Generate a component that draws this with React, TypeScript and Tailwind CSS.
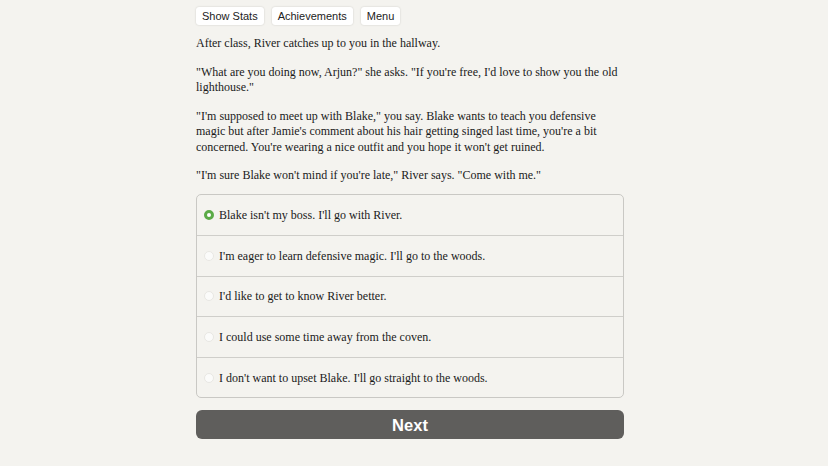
import { useState } from "react";

const choices = [
  "Blake isn't my boss. I'll go with River.",
  "I'm eager to learn defensive magic. I'll go to the woods.",
  "I'd like to get to know River better.",
  "I could use some time away from the coven.",
  "I don't want to upset Blake. I'll go straight to the woods.",
];

const serif = { fontFamily: '"Liberation Serif", "Times New Roman", serif' };

export default function App() {
  const [picked, setPicked] = useState(0);

  return (
    <div className="min-h-[466px] bg-[#f4f3ef] pr-[8px] text-[#1a1a1a]">
      <div className="mx-auto w-[428px] pt-[7px]">
        {/* Top buttons */}
        <div className="flex gap-[8px] font-['Liberation_Sans',Arial,sans-serif] text-[11px]">
          {["Show Stats", "Achievements", "Menu"].map((b) => (
            <button
              key={b}
              className="h-[18px] rounded-[3px] bg-white px-[6px] leading-[18px] text-[#222] shadow-[0_0_2px_rgba(0,0,0,0.18)]"
            >
              {b}
            </button>
          ))}
        </div>

        {/* Story text */}
        <div className="mt-[11px] space-y-[13px] text-[12px] leading-[15.5px]" style={serif}>
          <p>After class, River catches up to you in the hallway.</p>
          <p>
            "What are you doing now, Arjun?" she asks. "If you're free, I'd love to show you the old
            lighthouse."
          </p>
          <p>
            "I'm supposed to meet up with Blake," you say. Blake wants to teach you defensive magic
            but after Jamie's comment about his hair getting singed last time, you're a bit
            concerned. You're wearing a nice outfit and you hope it won't get ruined.
          </p>
          <p>"I'm sure Blake won't mind if you're late," River says. "Come with me."</p>
        </div>

        {/* Choices */}
        <div
          className="mt-[10px] overflow-hidden rounded-[5px] border border-[#c9c8c4] bg-[#f4f3ef]"
          style={serif}
        >
          {choices.map((c, i) => (
            <label
              key={c}
              onClick={() => setPicked(i)}
              className="flex h-[40.6px] cursor-pointer items-center gap-[5px] border-t border-[#cfceca] pl-[7px] text-[12px] first:border-t-0"
            >
              {picked === i ? (
                <span className="h-[10px] w-[10px] shrink-0 rounded-full border-[3px] border-[#5bab47] bg-white" />
              ) : (
                <span className="h-[10px] w-[10px] shrink-0 rounded-full border border-[#e8e7e3] bg-[#fbfbfa]" />
              )}
              <span>{c}</span>
            </label>
          ))}
        </div>

        {/* Next */}
        <button className="mt-[12px] h-[29px] w-full rounded-[6px] bg-[#5f5e5c] font-['Liberation_Sans',Arial,sans-serif] text-[16.5px] font-bold text-white">
          Next
        </button>
      </div>
    </div>
  );
}
